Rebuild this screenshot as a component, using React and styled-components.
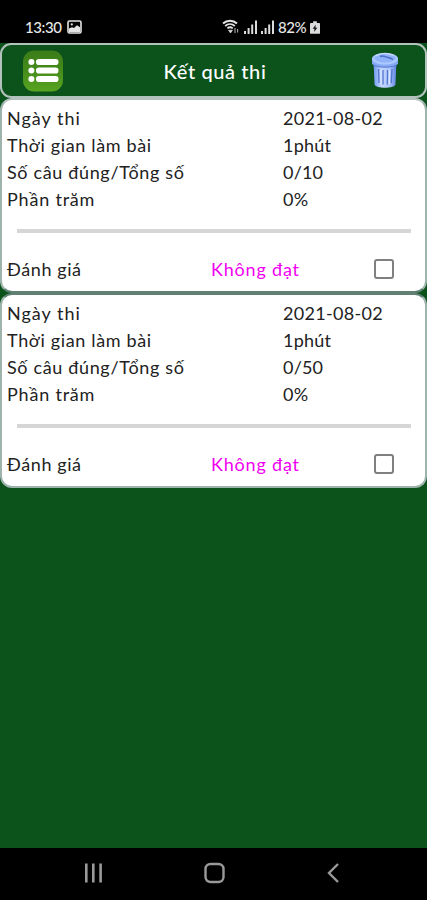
import React from 'react';
import styled, { createGlobalStyle } from 'styled-components';

const GlobalStyle = createGlobalStyle`
  * {
    box-sizing: border-box;
  }

  body {
    margin: 0;
    background: #0b521b;
    font-family: Lato, 'Noto Sans', sans-serif;
  }
`;

const Screen = styled.div`
  display: flex;
  flex-direction: column;
  width: 427px;
  height: 900px;
  overflow: hidden;
  background: #0b521b;
`;

const StatusBar = styled.div`
  display: flex;
  flex: none;
  justify-content: space-between;
  height: 43px;
  padding: 11px 107px 0 25px;
  background: #000;
  color: #e8e8e8;
`;

const StatusGroup = styled.div`
  display: flex;
  align-items: center;
  height: 32px;
  gap: ${(props) => props.$gap}px;
`;

const StatusText = styled.span`
  font-size: 15px;
  font-weight: 500;
  letter-spacing: ${(props) => props.$spacing || 0}px;
  white-space: nowrap;
`;

const Header = styled.header`
  display: flex;
  flex: none;
  align-items: center;
  justify-content: space-between;
  height: 55px;
  padding: 0 26px 0 20px;
  border: 2px solid #b4c2be;
  border-radius: 11px;
  background: #0b521b;
`;

const Title = styled.h1`
  margin: 0 5px 0 0;
  color: #fff;
  font-size: 20px;
  font-weight: 500;
  letter-spacing: 0.6px;
  white-space: nowrap;
`;

const IconButton = styled.button`
  display: block;
  padding: 0 0 ${(props) => props.$lift || 0}px;
  border: 0;
  background: none;
  line-height: 0;
`;

const Card = styled.section`
  flex: none;
  height: 195px;
  padding: 5px 14px 0 5px;
  border: 2px solid #9db3ac;
  border-top-color: ${(props) => (props.$first ? '#b4c2be' : '#5f8072')};
  border-bottom-color: ${(props) => (props.$first ? '#5f8072' : '#9db3ac')};
  border-radius: 12px;
  background: #fff;
`;

const Row = styled.div`
  display: grid;
  grid-template-columns: 276px 1fr;
  height: 27px;
  align-items: center;
`;

const Text = styled.span`
  color: ${(props) => props.$color || '#222'};
  font-size: 18px;
  letter-spacing: ${(props) => props.$spacing || 0}px;
  line-height: 27px;
  white-space: nowrap;
`;

const Divider = styled.hr`
  height: 4px;
  margin: 16px 0 0 10px;
  border: 0;
  background: #d6d6d6;
`;

const RatingRow = styled.div`
  display: grid;
  grid-template-columns: 204px 163px 1fr;
  align-items: center;
  margin-top: 23px;
`;

const Checkbox = styled.span`
  width: 20px;
  height: 20px;
  margin-bottom: 2px;
  border: 2px solid #808080;
  border-radius: 3px;
`;

const NavBar = styled.nav`
  display: flex;
  flex: none;
  align-items: center;
  justify-content: space-between;
  height: 52px;
  margin-top: auto;
  padding: 0 86px 2px 82px;
  background: #000;
`;

const PictureIcon = () => (
  <svg width="15" height="14" viewBox="0 0 15 14">
    <rect x="1" y="1" width="13" height="12" rx="1.5" fill="none" stroke="#e4e4e4" strokeWidth="1.6" />
    <path d="M2 12V8.500l3-1.200 2 .6 3-2.600 3 2V12H2z" fill="#e4e4e4" />
    <circle cx="4.8" cy="4.4" r="1.1" fill="#e4e4e4" />
  </svg>
);

const WifiIcon = () => (
  <svg width="18" height="16" viewBox="0 0 18 16" fill="none" stroke="#e4e4e4">
    <path d="M1 4.5C5 .8 11 .8 15 4.5" strokeWidth="2" />
    <path d="M3.2 7C6 4.4 10 4.4 12.8 7" strokeWidth="1.8" />
    <path d="M5.4 9.4C7 8 9 8 10.8 9.4" strokeWidth="1.8" />
    <path d="M6.5 11.2h4L8.5 14z" fill="#e4e4e4" strokeWidth=".6" />
    <path d="M13 9v5M15.6 10v3.5" stroke="#999" strokeWidth="1.2" />
  </svg>
);

const SignalIcon = () => (
  <svg width="13" height="14" viewBox="0 0 13 14" fill="#dcdcdc">
    <rect x="0" y="11" width="2" height="3" />
    <rect x="3.6" y="8" width="2" height="6" />
    <rect x="7.2" y="4.5" width="2" height="9.5" />
    <rect x="11" y="0.5" width="2" height="13.5" />
  </svg>
);

const BatteryIcon = () => (
  <svg width="10" height="13" viewBox="0 0 11 14">
    <path d="M3.5 0h4v2H10a1 1 0 0 1 1 1v10a1 1 0 0 1-1 1H1a1 1 0 0 1-1-1V3a1 1 0 0 1 1-1h2.5z" fill="#dcdcdc" />
    <path d="M6.2 4L3 8.4h2L4.5 12 8 7.4H6z" fill="#111" />
  </svg>
);

const ListIcon = () => (
  <svg width="42" height="42" viewBox="0 0 42 42">
    <defs>
      <linearGradient id="list-bg" x1="0" y1="0" x2="0" y2="1">
        <stop offset="0" stopColor="#3a7c18" />
        <stop offset="0.5" stopColor="#458c1b" />
        <stop offset="1" stopColor="#58a321" />
      </linearGradient>
    </defs>
    <rect x="1" y="0.5" width="40" height="41" rx="11" fill="url(#list-bg)" />
    {[12, 20.5, 29].map((y) => (
      <g key={y} fill="#fff">
        <circle cx="9.4" cy={y} r="3" />
        <rect x="14" y={y - 3} width="22.5" height="6" rx="2.800" />
      </g>
    ))}
  </svg>
);

const TrashIcon = () => (
  <svg width="28" height="36" viewBox="0 0 28 36">
    <defs>
      <linearGradient id="can" x1="0" y1="0" x2="1" y2="0">
        <stop offset="0" stopColor="#6f97f0" />
        <stop offset="0.35" stopColor="#c3d7ff" />
        <stop offset="0.7" stopColor="#abc5fc" />
        <stop offset="1" stopColor="#5c80df" />
      </linearGradient>
    </defs>
    <path d="M2.500 8l1 24.500C5 36.800 23 36.800 24.500 32.500L25.500 8z" fill="url(#can)" />
    <path d="M7.500 17l.5 14M12 18v14.500M16.500 18l-.2 14.500M21 17l-.7 14" stroke="#5577cf" strokeWidth="1.300" fill="none" />
    <path d="M10 18v14M18.600 18l-.3 14" stroke="#dbe7ff" strokeWidth="1.300" fill="none" />
    <path d="M1 7v4.500c2 5 24 5 26 0V7z" fill="#86a9f5" />
    <path d="M2 12.500c3.500 3.600 20.500 3.600 24 0" stroke="#5879d0" fill="none" />
    <ellipse cx="14" cy="6.800" rx="13" ry="6" fill="#abc8ff" />
    <ellipse cx="14" cy="6.300" rx="10.500" ry="4.200" fill="#8fb2fa" />
    <path d="M9 4.500c3-1.500 5 .5 8 1s3 .5 5 2" stroke="#4a6fc6" strokeWidth="1.400" fill="none" />
    <path d="M5 3.800C9 .9 17 .8 22 3.300" stroke="#cfdfff" strokeWidth="1.200" fill="none" />
  </svg>
);

const RecentsIcon = () => (
  <svg width="22" height="22" viewBox="0 0 22 22" stroke="#999" strokeWidth="2.6">
    <path d="M4.300 1.500v19M11.300 1.500v19M18.600 1.500v19" />
  </svg>
);

const HomeIcon = () => (
  <svg width="22" height="22" viewBox="0 0 22 22">
    <rect x="1.500" y="2" width="18" height="18" rx="5" fill="none" stroke="#999" strokeWidth="2.400" />
  </svg>
);

const BackIcon = () => (
  <svg width="16" height="22" viewBox="0 0 16 22">
    <path d="M13 2L4 11l9 9" fill="none" stroke="#999" strokeWidth="2.400" />
  </svg>
);

const results = [
  { id: 1, score: '0/10' },
  { id: 2, score: '0/50' },
];

const ResultCard = ({ score, first }) => (
  <Card $first={first}>
    <Row>
      <Text $spacing={1}>Ngày thi</Text>
      <Text $spacing={0.3}>2021-08-02</Text>
    </Row>
    <Row>
      <Text $spacing={0.65}>Thời gian làm bài</Text>
      <Text $spacing={0.2}>1phút</Text>
    </Row>
    <Row>
      <Text $spacing={0.65}>Số câu đúng/Tổng số</Text>
      <Text $spacing={0.2}>{score}</Text>
    </Row>
    <Row>
      <Text $spacing={0.8}>Phần trăm</Text>
      <Text $spacing={0.3}>0%</Text>
    </Row>
    <Divider />
    <RatingRow>
      <Text $spacing={0.6}>Đánh giá</Text>
      <Text $color="#f000f0" $spacing={0.8}>Không đạt</Text>
      <Checkbox role="checkbox" aria-checked="false" />
    </RatingRow>
  </Card>
);

const App = () => (
  <Screen>
    <GlobalStyle />
    <StatusBar>
      <StatusGroup $gap={5}>
        <StatusText $spacing={-0.4}>13:30</StatusText>
        <PictureIcon />
      </StatusGroup>
      <StatusGroup $gap={4}>
        <WifiIcon />
        <SignalIcon />
        <SignalIcon />
        <StatusText $spacing={-0.5}>82%</StatusText>
        <BatteryIcon />
      </StatusGroup>
    </StatusBar>
    <Header>
      <IconButton aria-label="Menu"><ListIcon /></IconButton>
      <Title>Kết quả thi</Title>
      <IconButton aria-label="Delete" $lift={2}><TrashIcon /></IconButton>
    </Header>
    {results.map((result, index) => (
      <ResultCard key={result.id} score={result.score} first={index === 0} />
    ))}
    <NavBar>
      <RecentsIcon />
      <HomeIcon />
      <BackIcon />
    </NavBar>
  </Screen>
);

export default App;
